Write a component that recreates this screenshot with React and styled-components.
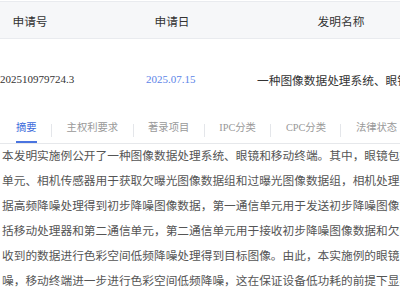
import React from 'react';
import styled, { createGlobalStyle } from 'styled-components';

// --- Global ---

const GlobalStyle = createGlobalStyle`
  html, body {
    margin: 0;
    padding: 0;
    background: #fff;
    overflow: hidden;
  }
  body {
    font-family: 'Liberation Serif', 'Noto Sans CJK SC', serif;
    color: #555;
  }
`;

// --- Layout ---

const Page = styled.div`
  width: 600px;
  padding-top: 1px;
`;

const HeaderRow = styled.div`
  display: grid;
  grid-template-columns: 60px 224px 114px;
  height: 36px;
  align-items: center;
  background: #f6f7f9;
  border-top: 1px solid #e9ebef;
  border-bottom: 1px solid #e9ebef;
`;

const HeadCell = styled.div`
  text-align: center;
  font-size: 11.7px;
  color: #333;
  white-space: nowrap;
`;

const DataRow = styled.div`
  display: grid;
  grid-template-columns: 146px 111px 1fr;
  height: 76px;
  align-items: center;
  padding-top: 4px;
  box-sizing: border-box;
`;

const DataCell = styled.div`
  white-space: nowrap;
  overflow: hidden;
  font-size: ${p => (p.$num ? '11px' : '11.7px')};
  color: ${p => (p.$link ? '#5b84e8' : '#333')};
`;

// --- Tabs ---

const TabBar = styled.div`
  display: flex;
  align-items: center;
  padding-left: 1.5px;
  border-bottom: 1px solid #e6e8eb;
`;

const Tab = styled.div`
  display: flex;
  align-items: flex-end;
  height: 28px;
  padding: 0 14.5px;
  font-size: 10.3px;
  color: ${p => (p.$active ? '#3d6bdb' : '#999')};
  white-space: nowrap;
`;

const TabLabel = styled.span`
  line-height: 26px;
  border-bottom: 2px solid ${p => (p.$active ? '#4a74e0' : 'transparent')};
`;

const TabDivider = styled.span`
  width: 1px;
  height: 13px;
  margin-top: 2px;
  background: #e4e6ea;
`;

// --- Abstract ---

const Abstract = styled.p`
  margin: 0;
  padding-left: 2px;
  width: 589px;
  font-size: 11.7px;
  line-height: 25px;
  color: #555;
`;

const tabs = ['摘要', '主权利要求', '著录项目', 'IPC分类', 'CPC分类', '法律状态'];

const abstractText =
  '本发明实施例公开了一种图像数据处理系统、眼镜和移动终端。其中，眼镜包括：相机传感器、处理器和第一通信' +
  '单元、相机传感器用于获取欠曝光图像数据组和过曝光图像数据组，相机处理器用于融合两组图像数据并对融合数' +
  '据高频降噪处理得到初步降噪图像数据，第一通信单元用于发送初步降噪图像数据给所述移动终端；该移动终端包' +
  '括移动处理器和第二通信单元，第二通信单元用于接收初步降噪图像数据和欠曝光图像数据组，移动处理器用于接' +
  '收到的数据进行色彩空间低频降噪处理得到目标图像。由此，本实施例的眼镜先对采集的图像数据进行初步高频降' +
  '噪，移动终端进一步进行色彩空间低频降噪，这在保证设备低功耗的前提下显著提升了图像的降噪效果。';

export default function App() {
  return (
    <>
      <GlobalStyle />
      <Page>
        <HeaderRow>
          <HeadCell>申请号</HeadCell>
          <HeadCell>申请日</HeadCell>
          <HeadCell>发明名称</HeadCell>
        </HeaderRow>
        <DataRow>
          <DataCell $num>202510979724.3</DataCell>
          <DataCell $num $link>2025.07.15</DataCell>
          <DataCell>一种图像数据处理系统、眼镜和移动终端</DataCell>
        </DataRow>

        <TabBar>
          {tabs.map((t, i) => (
            <React.Fragment key={t}>
              {i > 0 && <TabDivider />}
              <Tab $active={i === 0}>
                <TabLabel $active={i === 0}>{t}</TabLabel>
              </Tab>
            </React.Fragment>
          ))}
        </TabBar>

        <Abstract>{abstractText}</Abstract>
      </Page>
    </>
  );
}
